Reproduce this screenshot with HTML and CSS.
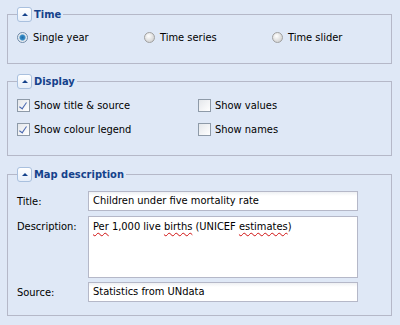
FILE: index.html
```html
<!DOCTYPE html>
<html lang="en">
<head>
    <meta charset="UTF-8">
    <title>Map settings</title>
    <link rel="stylesheet" href="styles.css">
</head>
<body>
    <fieldset class="group">
        <legend><span class="toggle"><i></i></span>Time</legend>
        <div class="options three">
            <label class="opt"><span class="radio checked"></span>Single year</label>
            <label class="opt"><span class="radio"></span>Time series</label>
            <label class="opt"><span class="radio"></span>Time slider</label>
        </div>
    </fieldset>

    <fieldset class="group display">
        <legend><span class="toggle"><i></i></span>Display</legend>
        <div class="options two">
            <label class="opt"><span class="check checked"></span>Show title &amp; source</label>
            <label class="opt"><span class="check"></span>Show values</label>
            <label class="opt"><span class="check checked"></span>Show colour legend</label>
            <label class="opt"><span class="check"></span>Show names</label>
        </div>
    </fieldset>

    <fieldset class="group desc">
        <legend><span class="toggle"><i></i></span>Map description</legend>
        <div class="form">
            <label class="lbl">Title:</label>
            <div class="field">Children under five mortality rate</div>
            <label class="lbl top">Description:</label>
            <div class="field area"><span class="typo">Per</span> 1,000 live <span class="typo">births</span> (UNICEF <span class="typo">estimates</span>)</div>
            <label class="lbl">Source:</label>
            <div class="field">Statistics from UNdata</div>
        </div>
    </fieldset>
</body>
</html>
```

FILE: styles.css
```css
body {
    margin: 0;
    padding-top: 7px;
    background-color: #dfe8f6;
    font-family: "DejaVu Sans Condensed", "DejaVu Sans", sans-serif;
    font-size: 11px;
    color: #000;
}

.group {
    margin: 0 8px 0 7px;
    padding: 7px 9px 18px 9px;
    border: 1px solid #b5b8c8;
    min-width: 0;
}

.group + .group {
    margin-top: 10px;
}

.group.display .options {
    padding-top: 1px;
}

.group.desc {
    margin-top: 11px;
    padding-top: 9px;
    padding-bottom: 13px;
}

legend {
    padding: 0 2px 0 0;
    display: flex;
    align-items: center;
    font-weight: bold;
    color: #15428b;
    height: 15px;
}

.toggle {
    width: 13px;
    height: 13px;
    margin-right: 2px;
    border: 1px solid #a9c0de;
    border-radius: 3px;
    background: linear-gradient(#ffffff, #e6eef9);
    display: flex;
    align-items: center;
    justify-content: center;
}

.toggle i {
    width: 0;
    height: 0;
    border-left: 3px solid transparent;
    border-right: 3px solid transparent;
    border-bottom: 3px solid #15428b;
}

.options {
    display: grid;
    row-gap: 8px;
}

.options.three {
    grid-template-columns: 127px 128px 1fr;
}

.options.two {
    grid-template-columns: 181px 1fr;
}

.opt {
    display: flex;
    align-items: center;
    height: 16px;
    white-space: nowrap;
}

.radio {
    width: 11px;
    height: 11px;
    margin-right: 5px;
    border: 1px solid #a0a0a0;
    border-radius: 50%;
    background: radial-gradient(circle at 40% 35%, #ffffff, #d4d4d4 75%);
    box-sizing: border-box;
    flex: none;
}

.radio.checked {
    border-color: #6f8aa8;
    background: radial-gradient(circle at 50% 50%, #1e6aa8 0, #3a8fc8 2.5px, #dfe6ee 3.5px, #f4f6f8 5px);
}

.check {
    width: 13px;
    height: 13px;
    margin-right: 4px;
    border: 1px solid #8e9aa8;
    background: linear-gradient(135deg, #e4e7eb, #ffffff);
    box-sizing: border-box;
    flex: none;
    position: relative;
}

.check.checked::after {
    content: "";
    position: absolute;
    left: 3px;
    top: 1px;
    width: 3px;
    height: 7px;
    border-right: 1.5px solid #4a68b0;
    border-bottom: 1.5px solid #4a68b0;
    transform: rotate(35deg);
}

.form {
    display: grid;
    grid-template-columns: 71px 270px;
    row-gap: 5px;
}

.lbl {
    display: flex;
    align-items: center;
}

.lbl.top {
    align-items: flex-start;
    padding-top: 4px;
}

.field {
    height: 20px;
    box-sizing: border-box;
    border: 1px solid #b5b8c8;
    background: linear-gradient(#eef0f3 0, #ffffff 4px);
    padding: 0 4px;
    line-height: 18px;
    white-space: nowrap;
    overflow: hidden;
}

.field.area {
    height: 62px;
    padding-top: 1px;
    margin-bottom: -1px;
    background: #fff;
    white-space: normal;
}

.typo {
    text-decoration: underline wavy #d01010;
    text-decoration-thickness: 1px;
    text-underline-offset: 2px;
}
```
